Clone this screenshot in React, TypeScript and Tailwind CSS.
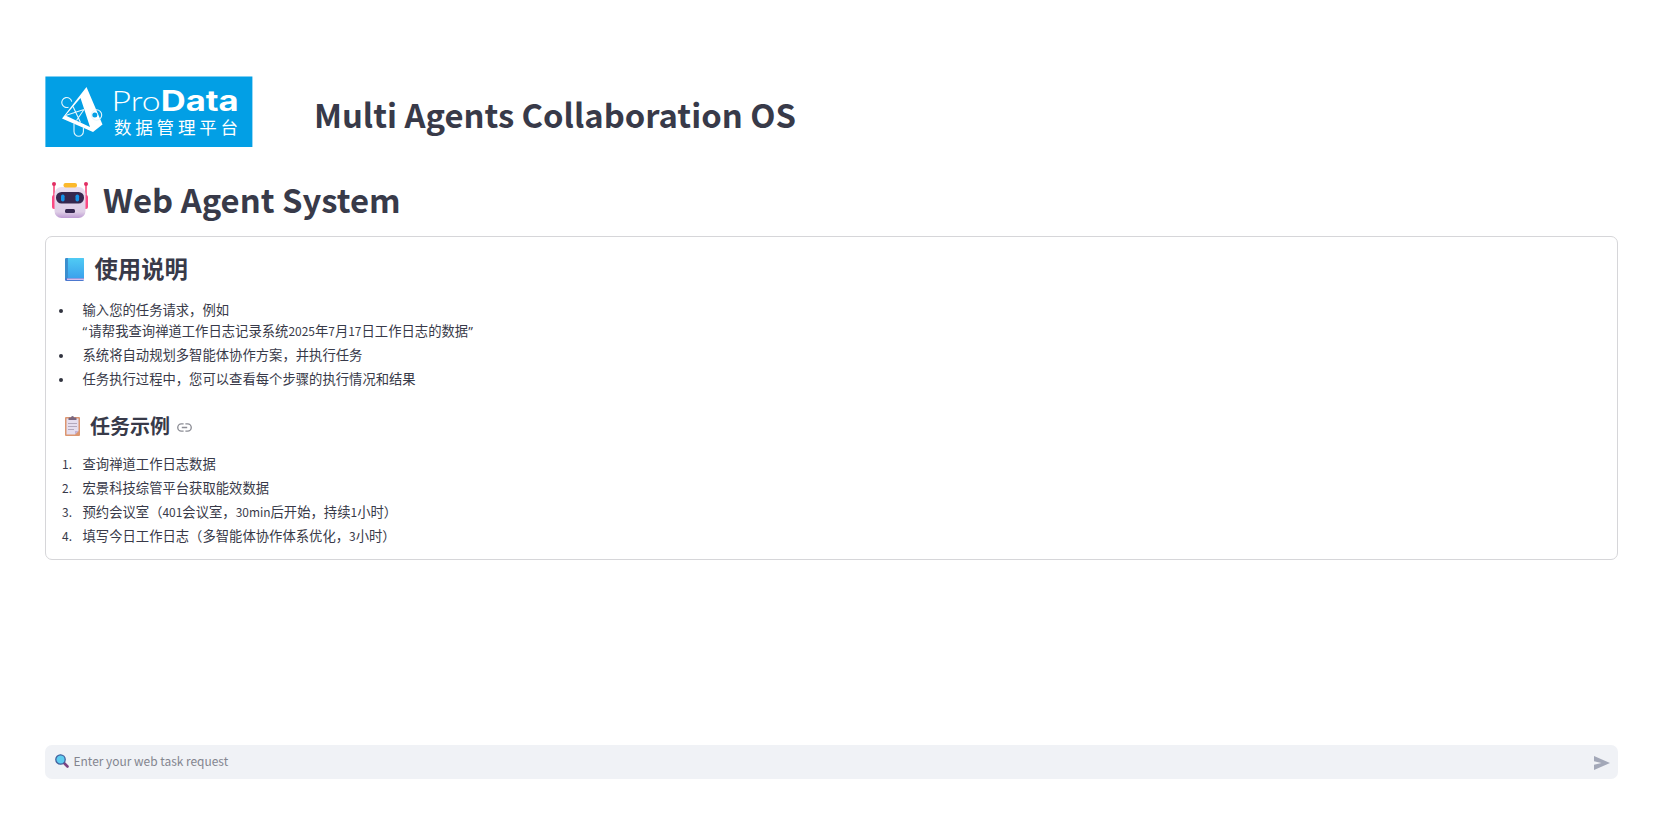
import { ReactNode } from "react";

// Latin runs are set a little smaller than the Chinese ones around them
function Latin({ children }: { children: ReactNode }) {
    return <span className="text-[11.95px]">{children}</span>;
}

function Quote({ children }: { children: ReactNode }) {
    return <span className="inline-block w-[6px] font-['Open_Sans',sans-serif] text-[13.333px] leading-none">{children}</span>;
}

function Logo() {
    return (
        <svg className="shrink-0 w-[208px] h-[72px]" viewBox="0 0 208 72">
            <rect x="0.400" y="0.500" width="207" height="70.500" fill="#029fe5" />
            <path d="M41.500 11L57.500 48.500 48 56 17 42.500zM35.500 22L20.500 39.500 45 51z" fill="#fff" fillRule="evenodd" />
            <g fill="none" stroke="#e4f6fd" strokeWidth="1.100">
                <path d="M23.500 31.200a5 5 0 1 1 3.200-5.500M29 47.500v8a4.700 4.700 0 0 0 9.400 0V52" />
                <path d="M28 30.500l7.500 16M20.500 39.500l18.500-6M39 33.500l-7.500 11" />
                <circle cx="51.500" cy="39" r="5.200" />
            </g>
            <circle cx="49.800" cy="39" r="2.500" fill="#029fe5" />
            <text x="66.500" y="34.500" fontFamily="Lato" fontWeight="300" fontSize="28" fill="#fff" textLength="49" lengthAdjust="spacingAndGlyphs">Pro</text>
            <text x="115.700" y="34.500" fontFamily="Inter" fontWeight="700" fontSize="28" fill="#fff" textLength="78" lengthAdjust="spacingAndGlyphs">Data</text>
            <text x="69" y="57.500" fontFamily="Noto Sans CJK SC, sans-serif" fontWeight="400" fontSize="17.500" letterSpacing="3.800" fill="#fff">数据管理平台</text>
        </svg>
    );
}

function Robot() {
    return (
        <svg className="w-[36px] h-[36px]" viewBox="0 0 36 36">
            <defs>
                <linearGradient id="face" x1="0" y1="0" x2="0" y2="1">
                    <stop offset="0" stopColor="#e9dff0" />
                    <stop offset=".8" stopColor="#dfcfe7" />
                    <stop offset="1" stopColor="#bd9bd2" />
                </linearGradient>
            </defs>
            <path d="M2 3v14M34 3v14" stroke="#f5336b" strokeWidth="1.400" />
            <circle cx="2" cy="2" r="2" fill="#e12f63" />
            <circle cx="34" cy="2" r="2" fill="#e12f63" />
            <rect x="0" y="13" width="6" height="14" rx="2" fill="#fb4a83" />
            <rect x="30" y="13" width="6" height="14" rx="2" fill="#fb4a83" />
            <rect x="2.500" y="5" width="31" height="31" rx="7" fill="url(#face)" />
            <rect x="11.500" y="1" width="13.500" height="4.500" rx="2" fill="#fbb92c" />
            <rect x="4" y="10" width="28" height="11.500" rx="5.500" fill="#36284f" />
            <rect x="9" y="12.500" width="3.600" height="7" rx="1.800" fill="#1493e8" />
            <rect x="23.500" y="12.500" width="3.600" height="7" rx="1.800" fill="#1493e8" />
            <rect x="13" y="27" width="10" height="4" rx="1.500" fill="#36284f" />
        </svg>
    );
}

function Book() {
    return (
        <svg className="w-[19px] h-[23px]" viewBox="0 0 19 23">
            <defs>
                <linearGradient id="cover" x1="0" y1="0" x2="0" y2="1">
                    <stop offset="0" stopColor="#50cbf4" />
                    <stop offset="1" stopColor="#3ba2ec" />
                </linearGradient>
            </defs>
            <rect width="19" height="23" rx="1.500" fill="#4c78cf" />
            <path d="M2 20.500h17v1.500H2z" fill="#d5bdeb" />
            <path d="M2.500 0H18a1 1 0 0 1 1 1v19H2.500z" fill="url(#cover)" />
            <path d="M1.500 0h1.300v20H1a1 1 0 0 0-1 1V1.500A1.500 1.500 0 0 1 1.500 0z" fill="#3a8fce" />
        </svg>
    );
}

function Clipboard() {
    return (
        <svg className="w-[15px] h-[20px]" viewBox="0 0 15 20">
            <rect y="1" width="15" height="19" rx="1" fill="#dc9670" />
            <path d="M1.500 2.500h12V15L10 18.500H1.500z" fill="#e6deee" />
            <path d="M13.500 15L10 18.500V15z" fill="#c5b2d3" />
            <path d="M3.500 4V2.500a1 1 0 0 1 1-1H6a1.500 1.500 0 0 1 3 0h1.500a1 1 0 0 1 1 1V4z" fill="#79667f" />
            <path d="M3 7.500h9M3 10.500h9M3 13.500h6" stroke="#b3a8bc" />
        </svg>
    );
}

const instructions = ["系统将自动规划多智能体协作方案，并执行任务", "任务执行过程中，您可以查看每个步骤的执行情况和结果"];

const examples: ReactNode[] = [
    "查询禅道工作日志数据",
    "宏景科技综管平台获取能效数据",
    <>预约会议室（<Latin>401</Latin>会议室，<Latin>30min</Latin>后开始，持续<Latin>1</Latin>小时）</>,
    <>填写今日工作日志（多智能体协作体系优化，<Latin>3</Latin>小时）</>,
];

export default function App() {
    return (
        <main className="flex flex-col bg-white px-[45px] pt-[76px] w-full h-[820px] font-['Noto_Sans_CJK_SC',sans-serif] text-[#383a49] text-[13.333px] leading-[21.333px]">
            <header className="flex h-[72px]">
                <Logo />
                <h1 className="mt-[14px] ml-[61px] font-bold text-[32.8px] leading-[48px] whitespace-nowrap">Multi Agents Collaboration OS</h1>
            </header>
            <div className="flex items-start h-[88px]">
                <div className="mt-[34px] ml-[7px]"><Robot /></div>
                <h1 className="mt-[27px] ml-[15px] font-bold text-[32.8px] leading-[48px] whitespace-nowrap">Web Agent System</h1>
            </div>
            <section className="border border-[#d6d6d9] rounded-[7px] w-full max-w-[1573px] h-[324px]">
                <h2 className="flex items-center pt-[2px] pl-[19px] h-[62px] font-bold text-[23.333px] leading-none">
                    <Book />
                    <span className="ml-[10.500px]">使用说明</span>
                </h2>
                <ul className="flex flex-col gap-[2.667px]">
                    <li className="flex">
                        <span className="mt-[10px] ml-[13px] mr-[19.500px] rounded-full w-[4px] h-[4px] bg-[#31333f]"></span>
                        <p>输入您的任务请求，例如<br /><Quote>“</Quote>请帮我查询禅道工作日志记录系统<Latin>2025</Latin>年<Latin>7</Latin>月<Latin>17</Latin>日工作日志的数据<Quote>”</Quote></p>
                    </li>
                    {instructions.map((text) => (
                        <li key={text} className="flex">
                            <span className="mt-[10px] ml-[13px] mr-[19.500px] rounded-full w-[4px] h-[4px] bg-[#31333f]"></span>
                            <p>{text}</p>
                        </li>
                    ))}
                </ul>
                <h3 className="flex items-center pt-[9px] pl-[19px] h-[63px] font-bold text-[20px] leading-none">
                    <Clipboard />
                    <span className="ml-[10px]">任务示例</span>
                    <svg className="mt-[3px] ml-[7px] w-[15px] h-[9px]" viewBox="0 0 16 10" fill="none" stroke="#8c8d95" strokeWidth="1.500">
                        <path d="M7 1H4.500a4 4 0 0 0 0 8H7M9 1h2.500a4 4 0 0 1 0 8H9M5 5h6" />
                    </svg>
                </h3>
                <ol className="flex flex-col gap-[2.667px]">
                    {examples.map((text, i) => (
                        <li key={i} className="flex">
                            <span className="pl-[16px] w-[36.500px]"><Latin>{i + 1}.</Latin></span>
                            <p>{text}</p>
                        </li>
                    ))}
                </ol>
            </section>
            <div className="flex items-center bg-[#f0f2f6] mt-[185px] pl-[10px] pr-[8px] rounded-[7px] w-full max-w-[1573px] h-[34px]">
                <svg className="mb-[2px] w-[14px] h-[14px]" viewBox="0 0 14 14">
                    <path d="M9 9l3.500 3.500" stroke="#7e4380" strokeWidth="2.600" strokeLinecap="round" />
                    <circle cx="5.500" cy="5.500" r="4.700" fill="#5fcdf0" stroke="#415f9d" strokeWidth="1.300" />
                </svg>
                <p className="mb-[2px] ml-[4.500px] text-[#83858f] text-[11.95px]">Enter your web task request</p>
                <svg className="mt-[2px] ml-auto w-[16px] h-[14px]" viewBox="0 0 16 14">
                    <path d="M0 0l16 7L0 14V8.700L7.500 7 0 5.300z" fill="#a3a8b8" />
                </svg>
            </div>
        </main>
    );
}
